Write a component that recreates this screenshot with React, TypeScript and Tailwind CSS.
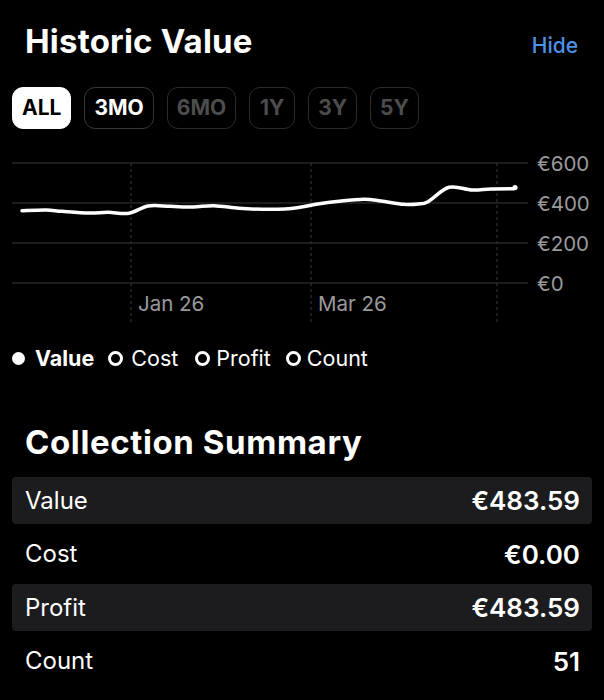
import React from "react";

const points: [number, number][] = [
  [22, 60.7], [46, 60], [62, 61.3], [89, 63], [108, 62.3], [129, 63.3],
  [148, 56], [170, 56.3], [193, 57], [214, 55.7], [239, 58.3], [262, 59.3],
  [285, 59], [300, 57.3], [316, 54.3], [339, 51.3], [364, 49.3], [381, 51],
  [404, 54.3], [418, 54], [428, 51.7], [449, 37.3], [472, 40], [491, 39], [514, 38.7],
];

// catmull-rom -> cubic bezier, so the line reads smooth like the native chart
function smoothPath(pts: [number, number][]) {
  let d = `M ${pts[0][0]} ${pts[0][1]}`;
  for (let i = 0; i < pts.length - 1; i++) {
    const p0 = pts[i - 1] || pts[i];
    const p1 = pts[i];
    const p2 = pts[i + 1];
    const p3 = pts[i + 2] || p2;
    const t = 0.5 / 3;
    const c1x = p1[0] + (p2[0] - p0[0]) * t;
    const c1y = p1[1] + (p2[1] - p0[1]) * t;
    const c2x = p2[0] - (p3[0] - p1[0]) * t;
    const c2y = p2[1] - (p3[1] - p1[1]) * t;
    d += ` C ${c1x} ${c1y}, ${c2x} ${c2y}, ${p2[0]} ${p2[1]}`;
  }
  return d;
}

const ranges = [
  { label: "ALL", state: "on" },
  { label: "3MO", state: "idle" },
  { label: "6MO", state: "off" },
  { label: "1Y", state: "off" },
  { label: "3Y", state: "off" },
  { label: "5Y", state: "off" },
];

const rows = [
  { label: "Value", value: "€483.59", shaded: true },
  { label: "Cost", value: "€0.00", shaded: false },
  { label: "Profit", value: "€483.59", shaded: true },
  { label: "Count", value: "51", shaded: false },
];

function Chart() {
  const grid = [
    { y: 13, label: "€600" },
    { y: 53, label: "€400" },
    { y: 93, label: "€200" },
    { y: 133, label: "€0" },
  ];
  return (
    <svg width="604" height="172" className="block" style={{ fontFamily: "Inter, 'Noto Sans', sans-serif" }}>
      {grid.map((g) => (
        <g key={g.label}>
          <line x1="12" x2="528" y1={g.y} y2={g.y} stroke="#383838" strokeWidth="1" />
          <text x="537" y={g.y} dominantBaseline="central" fontSize="20.5" fill="#9a9a9a">
            {g.label}
          </text>
        </g>
      ))}
      {[131, 311, 497].map((x) => (
        <line key={x} x1={x} x2={x} y1="13" y2="172" stroke="#3a3a3a" strokeWidth="1" strokeDasharray="3 3" />
      ))}
      <text x="138" y="153" dominantBaseline="central" fontSize="20.5" fill="#9a9a9a">Jan 26</text>
      <text x="318" y="153" dominantBaseline="central" fontSize="20.5" fill="#9a9a9a">Mar 26</text>
      <path d={smoothPath(points)} fill="none" stroke="#fff" strokeWidth="3.5" strokeLinejoin="round" strokeLinecap="round" />
      <circle cx="515" cy="37.5" r="2.6" fill="#fff" />
    </svg>
  );
}

export default function App() {
  return (
    <div className="min-h-[700px] w-[604px] bg-black text-white" style={{ fontFamily: "Inter, 'Noto Sans', sans-serif" }}>
      {/* HEADER */}
      <div className="flex items-start justify-between pl-[25px] pr-[26px] pt-[21px]">
        <h1 className="text-[33px] font-bold leading-[40px] tracking-[0.2px]">Historic Value</h1>
        <button className="mt-[13px] text-[21px] font-medium leading-[24px] text-[#4f92ea]">Hide</button>
      </div>

      {/* RANGE CHIPS */}
      <div className="mt-[26px] flex gap-[13px] pl-[12px]">
        {ranges.map((r) => (
          <div
            key={r.label}
            className={`flex h-[42px] min-w-[46px] items-center justify-center rounded-[11px] border px-[9px] text-[21px] font-bold ${
              r.state === "on"
                ? "border-white bg-white text-black"
                : r.state === "idle"
                  ? "border-[#363636] text-white"
                  : "border-[#2a2a2a] text-[#4d4d4d]"
            }`}
          >
            {r.label}
          </div>
        ))}
      </div>

      {/* CHART */}
      <div className="mt-[21px]">
        <Chart />
      </div>

      {/* LEGEND */}
      <div className="mt-[24px] flex items-center pl-[12px] text-[21.5px] leading-[24px]">
        <span className="h-[13px] w-[13px] rounded-full bg-white" />
        <span className="ml-[10px] font-bold">Value</span>
        <span className="ml-[14px] h-[15px] w-[15px] rounded-full border-[3px] border-white" />
        <span className="ml-[8px]">Cost</span>
        <span className="ml-[17px] h-[15px] w-[15px] rounded-full border-[3px] border-white" />
        <span className="ml-[6px]">Profit</span>
        <span className="ml-[15px] h-[15px] w-[15px] rounded-full border-[3px] border-white" />
        <span className="ml-[6px]">Count</span>
      </div>

      {/* COLLECTION SUMMARY */}
      <h2 className="mt-[52px] pl-[25px] text-[33px] font-bold leading-[40px] tracking-[0.6px]">Collection Summary</h2>
      <div className="mt-[15px] flex flex-col gap-[6.5px] px-[12px]">
        {rows.map((r) => (
          <div
            key={r.label}
            className={`flex h-[47px] items-center justify-between rounded-[4px] pl-[13px] pr-[12px] ${r.shaded ? "bg-[#1c1c1e]" : ""}`}
          >
            <span className="text-[24px]">{r.label}</span>
            <span className="text-[26px] font-semibold">{r.value}</span>
          </div>
        ))}
      </div>
    </div>
  );
}
